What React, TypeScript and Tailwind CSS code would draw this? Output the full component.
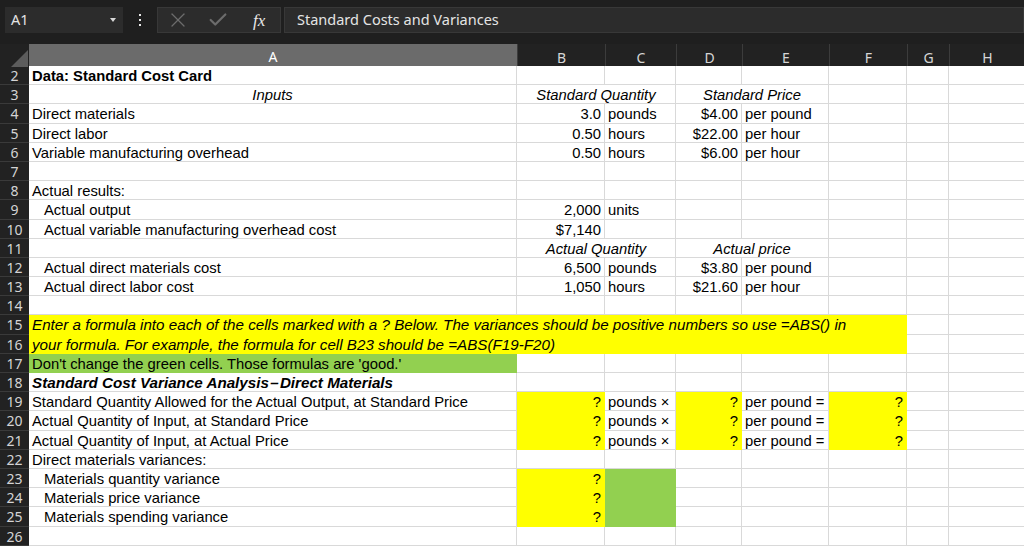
import { Check, X } from "lucide-react";
import clsx from "clsx";

type Cell = {
  t?: string;
  span?: number;
  a?: "l" | "r" | "c";
  f?: "y" | "g";
  b?: boolean;
  i?: boolean;
  ind?: boolean;
  wide?: boolean;
};

const SPAN: Record<number, string> = {
  1: "col-span-1",
  2: "col-span-2",
  6: "col-span-6",
  8: "col-span-8",
};

const COLS = ["A", "B", "C", "D", "E", "F", "G", "H"];

const q = (t: string): Cell => ({ t, a: "r" });
const ind = (t: string): Cell => ({ t, ind: true });

const rows: [number, Cell[]][] = [
  [2, [{ t: "Data: Standard Cost Card", b: true }]],
  [
    3,
    [
      { t: "Inputs", i: true, a: "c" },
      { t: "Standard Quantity", i: true, a: "c", span: 2 },
      { t: "Standard Price", i: true, a: "c", span: 2 },
    ],
  ],
  [4, [{ t: "Direct materials" }, q("3.0"), { t: "pounds" }, q("$4.00"), { t: "per pound" }]],
  [5, [{ t: "Direct labor" }, q("0.50"), { t: "hours" }, q("$22.00"), { t: "per hour" }]],
  [6, [{ t: "Variable manufacturing overhead" }, q("0.50"), { t: "hours" }, q("$6.00"), { t: "per hour" }]],
  [7, []],
  [8, [{ t: "Actual results:" }]],
  [9, [ind("Actual output"), q("2,000"), { t: "units" }]],
  [10, [ind("Actual variable manufacturing overhead cost"), q("$7,140")]],
  [
    11,
    [
      {},
      { t: "Actual Quantity", i: true, a: "c", span: 2 },
      { t: "Actual price", i: true, a: "c", span: 2 },
    ],
  ],
  [12, [ind("Actual direct materials cost"), q("6,500"), { t: "pounds" }, q("$3.80"), { t: "per pound" }]],
  [13, [ind("Actual direct labor cost"), q("1,050"), { t: "hours" }, q("$21.60"), { t: "per hour" }]],
  [14, []],
  [
    15,
    [
      {
        t: "Enter a formula into each of the cells marked with a ? Below. The variances should be positive numbers so use =ABS() in",
        i: true,
        f: "y",
        span: 6,
        wide: true,
      },
    ],
  ],
  [
    16,
    [
      {
        t: "your formula. For example, the formula for cell B23 should be =ABS(F19-F20)",
        i: true,
        f: "y",
        span: 6,
        wide: true,
      },
    ],
  ],
  [17, [{ t: "Don't change the green cells. Those formulas are 'good.'", f: "g" }]],
  [18, [{ t: "Standard Cost Variance Analysis\u200a\u2013\u200aDirect Materials", b: true, i: true, wide: true }]],
  [
    19,
    [
      { t: "Standard Quantity Allowed for the Actual Output, at Standard Price" },
      { t: "?", a: "r", f: "y" },
      { t: "pounds \u00d7" },
      { t: "?", a: "r", f: "y" },
      { t: "per pound =" },
      { t: "?", a: "r", f: "y" },
    ],
  ],
  [
    20,
    [
      { t: "Actual Quantity of Input, at Standard Price" },
      { t: "?", a: "r", f: "y" },
      { t: "pounds \u00d7" },
      { t: "?", a: "r", f: "y" },
      { t: "per pound =" },
      { t: "?", a: "r", f: "y" },
    ],
  ],
  [
    21,
    [
      { t: "Actual Quantity of Input, at Actual Price" },
      { t: "?", a: "r", f: "y" },
      { t: "pounds \u00d7" },
      { t: "?", a: "r", f: "y" },
      { t: "per pound =" },
      { t: "?", a: "r", f: "y" },
    ],
  ],
  [22, [{ t: "Direct materials variances:" }]],
  [23, [ind("Materials quantity variance"), { t: "?", a: "r", f: "y" }, { f: "g" }]],
  [24, [ind("Materials price variance"), { t: "?", a: "r", f: "y" }, { f: "g" }]],
  [25, [ind("Materials spending variance"), { t: "?", a: "r", f: "y" }, { f: "g" }]],
  [26, []],
];

function SheetCell({ cell }: { cell: Cell }) {
  return (
    <div
      className={clsx(
        "overflow-hidden whitespace-nowrap border-b border-r px-[3px] leading-[20px] text-black",
        cell.wide ? "text-[15.2px]" : "text-[14.8px]",
        SPAN[cell.span ?? 1],
        cell.f === "y" && "border-[#ffff00] bg-[#ffff00]",
        cell.f === "g" && "border-[#92d050] bg-[#92d050]",
        !cell.f && "border-[#d9d9d9] bg-white",
        cell.a === "r" && "text-right",
        cell.a === "c" && "text-center",
        cell.b && "font-bold",
        cell.i && "italic",
        cell.ind && "pl-[15px]"
      )}
    >
      {cell.t}
    </div>
  );
}

function fillRow(cells: Cell[]) {
  const used = cells.reduce((sum, c) => sum + (c.span ?? 1), 0);
  const rest: Cell[] = Array.from({ length: Math.max(0, 8 - used) }, () => ({}));
  return [...cells, ...rest];
}

export default function App() {
  return (
    <div className="h-[546px] w-[1024px] overflow-hidden bg-[#1f1f1f] font-['Liberation_Sans',Arial,sans-serif]">
      {/* formula bar */}
      <div className="flex h-[44px] items-start pt-[7px] font-['Noto_Sans','Open_Sans',sans-serif] text-[14.5px] text-[#e4e4e4]">
        <div className="ml-[5px] flex h-[26px] w-[118px] items-center justify-between bg-[#2c2c2c] pl-[6px] pr-[7px]">
          <span>A1</span>
          <span className="h-0 w-0 border-l-[3.5px] border-r-[3.5px] border-t-[4px] border-l-transparent border-r-transparent border-t-[#d8d8d8]" />
        </div>
        <div className="flex h-[26px] w-[34px] flex-col items-center justify-center gap-[3px]">
          <span className="h-[2px] w-[2px] bg-[#e8e8e8]" />
          <span className="h-[2px] w-[2px] bg-[#e8e8e8]" />
          <span className="h-[2px] w-[2px] bg-[#e8e8e8]" />
        </div>
        <div className="flex h-[26px] w-[124px] items-center border border-[#383838] bg-[#2c2c2c]">
          <X className="ml-[8px] h-[24px] w-[24px] text-[#6c6c6c]" strokeWidth={1.3} />
          <Check className="ml-[17px] h-[22px] w-[22px] text-[#6c6c6c]" strokeWidth={2.4} />
          <span className="ml-[24px] font-['Liberation_Serif',serif] text-[17px] italic leading-none text-[#e8e8e8]">
            fx
          </span>
        </div>
        <div className="ml-[3px] flex h-[26px] flex-1 items-center border border-[#383838] bg-[#2c2c2c] pl-[12px]">
          Standard Costs and Variances
        </div>
      </div>

      {/* column headers */}
      <div className="grid h-[22px] grid-cols-[29px_488px_88px_71px_66px_87px_78px_42px_76px] font-['Noto_Sans','Open_Sans',sans-serif] text-[14px]">
        <div className="relative bg-[#222222]">
          <div className="absolute bottom-[2px] right-[1px] h-0 w-0 border-b-[17px] border-l-[17px] border-b-[#5c5c5c] border-l-transparent" />
        </div>
        {COLS.map((c) =>
          c === "A" ? (
            <div
              key={c}
              className="flex items-center justify-center border-b-2 border-[#1e7145] bg-[#6b6b6b] pt-[2px] text-white"
            >
              {c}
            </div>
          ) : (
            <div
              key={c}
              className="flex items-center justify-center border-l border-b border-l-[#3c3c3c] border-b-[#c6c6c6] bg-[#222222] pt-[2px] text-[#d6d6d6]"
            >
              {c}
            </div>
          )
        )}
      </div>

      {/* sheet body */}
      <div className="grid auto-rows-[19.2px] grid-cols-[29px_488px_88px_71px_66px_87px_78px_42px_76px]">
        {rows.map(([n, cells]) => [
          <div
            key={`h${n}`}
            className="border-b border-[#3a3a3a] bg-[#222222] text-center font-['Noto_Sans','Open_Sans',sans-serif] text-[14px] leading-[19px] text-[#d4d4d4]"
          >
            {n}
          </div>,
          ...fillRow(cells).map((cell, i) => <SheetCell key={`${n}-${i}`} cell={cell} />),
        ])}
      </div>
    </div>
  );
}
